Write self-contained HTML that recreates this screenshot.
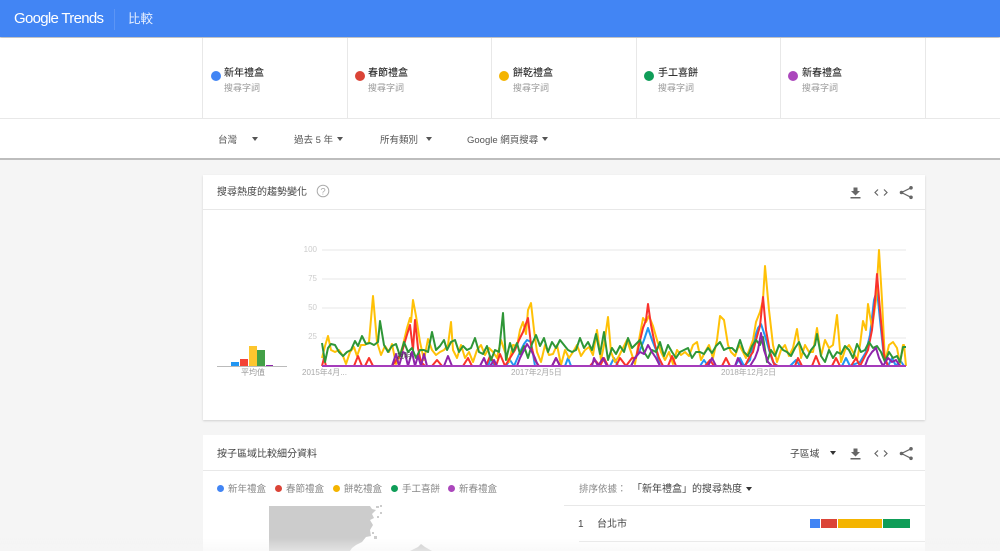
<!DOCTYPE html>
<html><head><meta charset="utf-8"><style>
html,body{margin:0;padding:0}
body{width:1000px;height:551px;overflow:hidden;position:relative;background:#f5f5f5;font-family:"Liberation Sans","Noto Sans CJK TC",sans-serif}
#w{position:absolute;left:0;top:0;width:1000px;height:551px;overflow:hidden;filter:blur(.3px)}
.a{position:absolute;white-space:nowrap}
.q{font-size:10px;color:#333;line-height:12px;font-weight:500}
.s{font-size:9px;color:#999;line-height:12px}
.f{font-size:9.5px;color:#555;line-height:12px}
.d{position:absolute;border-radius:50%}
.v{position:absolute;top:38px;width:1px;height:80px;background:#e8e8e8}
.t{position:absolute;width:0;height:0;border-left:3px solid transparent;border-right:3px solid transparent;border-top:4px solid #555}
.y{font-size:8px;color:#ccc;line-height:10px;text-align:right;width:16px;left:301px}
.x{font-size:8px;color:#aaa;line-height:10px}
.l{font-size:9.5px;color:#888;line-height:12px}
.g{position:absolute;left:322px;width:584px;height:2px;background:#f3f3f3}
</style></head><body><div id="w">
<div class="a" style="left:0;top:0;width:1000px;height:37px;background:#4285f4;box-shadow:0 1px 2px rgba(0,0,0,.3)"></div>
<div class="a" style="left:14px;top:10px;font-size:15px;line-height:18px;color:#fff;letter-spacing:-.7px">Google Trends</div>
<div class="a" style="left:114px;top:9px;width:1px;height:21px;background:#5c95f5"></div>
<div class="a" style="left:128px;top:12px;font-size:12.5px;line-height:15px;color:#e8f0fe">比較</div>

<div class="a" style="left:0;top:38px;width:1000px;height:80px;background:#fff;border-bottom:1px solid #e8e8e8"></div>
<div class="a" style="left:0;top:119px;width:1000px;height:39px;background:#fff;border-bottom:2px solid #bdbdbd"></div>
<div class="v" style="left:202px"></div><div class="v" style="left:347px"></div><div class="v" style="left:491px"></div><div class="v" style="left:636px"></div><div class="v" style="left:780px"></div><div class="v" style="left:925px"></div>

<div class="d" style="left:211px;top:71px;width:10px;height:10px;background:#4285f4"></div>
<div class="a q" style="left:224px;top:67.500px">新年禮盒</div><div class="a s" style="left:224px;top:81.500px">搜尋字詞</div>
<div class="d" style="left:355px;top:71px;width:10px;height:10px;background:#db4437"></div>
<div class="a q" style="left:368px;top:67.500px">春節禮盒</div><div class="a s" style="left:368px;top:81.500px">搜尋字詞</div>
<div class="d" style="left:499px;top:71px;width:10px;height:10px;background:#f4b400"></div>
<div class="a q" style="left:513px;top:67.500px">餅乾禮盒</div><div class="a s" style="left:513px;top:81.500px">搜尋字詞</div>
<div class="d" style="left:644px;top:71px;width:10px;height:10px;background:#0f9d58"></div>
<div class="a q" style="left:658px;top:67.500px">手工喜餅</div><div class="a s" style="left:658px;top:81.500px">搜尋字詞</div>
<div class="d" style="left:788px;top:71px;width:10px;height:10px;background:#ab47bc"></div>
<div class="a q" style="left:802px;top:67.500px">新春禮盒</div><div class="a s" style="left:802px;top:81.500px">搜尋字詞</div>

<div class="a f" style="left:218px;top:134.500px">台灣</div><div class="t" style="left:252px;top:137px"></div>
<div class="a f" style="left:294px;top:134.500px">過去 5 年</div><div class="t" style="left:337px;top:137px"></div>
<div class="a f" style="left:380px;top:134.500px">所有類別</div><div class="t" style="left:426px;top:137px"></div>
<div class="a f" style="left:467px;top:134.500px">Google 網頁搜尋</div><div class="t" style="left:542px;top:137px"></div>

<div class="a" style="left:203px;top:175px;width:722px;height:245px;background:#fff;box-shadow:0 1px 2px rgba(0,0,0,.15)"></div>
<div class="a" style="left:203px;top:209px;width:722px;height:1px;background:#e8e8e8"></div>
<div class="a" style="left:217px;top:186px;font-size:10px;line-height:13px;color:#444">搜尋熱度的趨勢變化</div>
<svg class="a" style="left:316px;top:184px" width="14" height="14" viewBox="0 0 14 14"><circle cx="7" cy="7" r="5.800" fill="none" stroke="#aaa" stroke-width="1"/><text x="7" y="10.300" font-size="9.500" text-anchor="middle" fill="#aaa" font-family="Liberation Sans">?</text></svg>

<svg class="a" style="left:849px;top:185px" width="66" height="15" viewBox="0 0 66 15"><path d="M4.500 2.500h4v3.500h2.500l-4.500 4.500L2 6h2.500zM1.500 12h10v1.500h-10z" fill="#666"/><path d="M29 4.500l-3 3 3 3M35 4.500l3 3-3 3" fill="none" stroke="#666" stroke-width="1.200"/><path d="M62 2.800L52.500 7.500l9.500 4.800" fill="none" stroke="#666" stroke-width="1.200"/><circle cx="62" cy="2.800" r="1.800" fill="#666"/><circle cx="52.500" cy="7.500" r="1.800" fill="#666"/><circle cx="62" cy="12.300" r="1.800" fill="#666"/></svg>

<div class="g" style="top:249px"></div><div class="g" style="top:278px"></div><div class="g" style="top:307px"></div><div class="g" style="top:337px"></div>
<div class="a y" style="top:245px">100</div><div class="a y" style="top:274px">75</div><div class="a y" style="top:303px">50</div><div class="a y" style="top:332px">25</div>

<div class="a" style="left:217px;top:366px;width:70px;height:1px;background:#bbb"></div>
<div class="a" style="left:231px;top:362px;width:8px;height:4px;background:#2196f3"></div>
<div class="a" style="left:240px;top:359px;width:8px;height:7px;background:#f44336"></div>
<div class="a" style="left:249px;top:346px;width:7.500px;height:20px;background:#fdc62e"></div>
<div class="a" style="left:257px;top:350px;width:8px;height:16px;background:#43a047"></div>
<div class="a" style="left:266px;top:365px;width:7px;height:1px;background:#8e24aa"></div>
<div class="a x" style="left:241px;top:368px;color:#999">平均值</div>
<div class="a x" style="left:302px;top:368px">2015年4月...</div>
<div class="a x" style="left:511px;top:368px">2017年2月5日</div>
<div class="a x" style="left:721px;top:368px">2018年12月2日</div>

<svg class="a" style="left:0;top:0" width="1000" height="400" viewBox="0 0 1000 400" fill="none" stroke-width="2" stroke-linejoin="round">
<polyline stroke="#2196f3" points="322,366 488,366 491,358 494,366 506,366 510,360 514,366 520,352 524,344 527,340 531,342 535,366 565,366 568,358 571,366 610,366 614,358 618,366 631,366 636,356 640,350 644,340 648,328 652,340 656,350 660,366 700,366 704,360 708,366 735,366 740,358 744,366 750,360 754,340 758,328 761,324 765,336 769,350 773,362 777,366 790,366 796,360 800,366 842,366 846,358 850,366 860,362 866,352 870,335 874,300 877,290 880,320 884,358 888,366 892,358 896,366 900,360 904,366"/>
<polyline stroke="#ffc107" points="322,358 325,346 328,336 331,350 335,352 339,350 343,356 346,364 350,352 354,347 357,356 361,345 365,345 369,342 373,296 377,342 381,355 385,346 389,352 392,344 396,364 399,358 403,345 407,328 410,318 411,322 413,300 416,316 420,342 424,360 428,339 432,350 436,355 440,352 444,350 448,345 451,322 453,350 457,358 461,345 465,358 469,352 473,362 477,350 481,345 485,355 489,348 493,352 497,358 501,340 505,352 509,362 513,345 517,346 520,330 523,322 526,334 528,310 531,303 534,330 537,352 541,362 545,345 549,355 553,354 557,345 561,365 565,350 569,358 573,352 577,345 581,356 585,350 589,347 593,355 597,330 601,360 604,345 608,317 611,352 615,362 619,356 623,348 627,340 631,352 635,364 639,340 643,318 646,322 649,316 653,326 657,340 661,352 665,360 669,352 673,364 677,350 681,355 685,352 689,356 693,345 697,342 701,360 705,352 709,345 713,358 717,340 720,316 724,320 728,345 731,352 735,356 739,345 743,352 746,358 750,348 753,340 756,322 760,312 763,300 765,266 769,310 773,345 777,362 781,350 785,345 789,356 793,348 797,329 801,358 805,345 809,352 813,352 817,328 821,356 825,340 829,348 833,345 837,315 841,362 845,350 849,345 853,352 857,360 860,345 863,321 866,330 868,304 872,328 876,300 879,250 882,300 885,362 889,345 893,342 897,348 900,364 903,345 904,345 906,366"/>
<polyline stroke="#f9322c" points="322,366 324,358 326,366 354,366 358,356 362,366 365,366 369,358 373,366 392,366 398,358 402,352 406,338 410,325 413,350 415,320 418,348 421,362 425,366 432,366 437,360 442,366 463,366 468,358 472,366 486,366 490,356 496,366 500,354 505,366 510,358 515,350 519,340 523,332 528,318 531,345 535,360 539,366 552,366 556,358 560,366 590,366 595,360 600,366 604,358 608,366 616,366 620,358 626,366 632,358 636,358 639,345 643,328 646,320 648,304 651,325 655,345 659,358 663,366 668,366 672,356 676,366 705,366 710,360 714,366 722,366 726,358 730,366 745,366 749,358 753,352 756,340 760,326 763,297 766,330 770,352 774,364 778,366 795,366 798,358 802,366 812,366 816,356 820,366 832,366 836,358 840,366 851,366 856,358 860,366 864,358 868,350 872,330 875,300 877,274 880,310 884,355 888,366 906,366"/>
<polyline stroke="#2e9637" points="322,343 325,362 328,348 331,344 335,345 339,352 343,356 347,352 351,350 355,341 358,346 362,336 366,344 370,343 374,345 378,342 380,321 384,345 388,352 392,346 396,344 400,356 404,342 408,352 412,348 416,358 420,350 424,350 428,352 432,332 436,350 440,346 444,340 447,350 451,342 455,340 459,352 463,346 467,350 471,348 475,338 479,352 483,354 487,346 491,360 495,350 499,352 503,313 506,360 510,343 513,352 517,343 520,354 524,346 528,358 532,344 536,335 540,346 544,338 548,352 552,342 556,348 560,340 564,345 568,350 572,352 576,350 580,338 584,348 588,342 592,350 596,334 600,354 604,332 608,360 612,348 616,354 620,346 624,352 628,338 632,348 636,344 640,340 644,352 648,358 652,350 656,352 660,342 664,356 668,345 672,352 676,358 680,352 684,350 688,348 692,358 696,352 700,352 704,354 708,348 712,353 716,346 720,342 724,350 728,348 732,348 736,352 740,340 744,352 748,356 752,346 756,340 760,345 763,337 767,362 771,350 775,356 779,345 783,350 787,352 791,356 795,348 799,342 803,352 807,358 811,350 815,345 817,334 821,356 825,362 829,350 833,358 837,352 841,354 845,346 849,350 853,358 857,344 861,352 865,350 869,342 873,348 877,346 881,352 885,362 889,352 893,358 897,356 900,362 903,347 906,347"/>
<polyline stroke="#8e24aa" points="322,366 392,366 396,354 399,366 403,352 405,353 408,366 412,352 415,366 418,356 421,366 424,354 427,366 444,366 448,356 452,366 480,366 484,358 487,366 490,366 494,360 497,366 517,366 520,358 524,350 527,344 531,350 535,358 538,366 552,366 556,358 560,366 592,366 594,358 598,366 603,358 607,366 631,366 635,358 640,352 644,354 648,345 652,352 656,358 660,366 708,366 712,358 716,366 735,366 738,358 742,366 750,366 755,358 758,350 761,333 764,350 768,362 772,366 865,366 868,358 872,352 876,348 879,358 883,366 888,358 892,362 896,360 900,366"/>
<line x1="322" y1="366" x2="906" y2="366" stroke="#a53cbb" stroke-width="2"/>
</svg>
<div class="a" style="left:397px;top:352px;font-size:7px;line-height:9px;color:#444">說明</div>

<div class="a" style="left:203px;top:435px;width:722px;height:116px;background:#fff"></div>
<div class="a" style="left:203px;top:470px;width:722px;height:1px;background:#e8e8e8"></div>
<div class="a" style="left:217px;top:447.500px;font-size:10px;line-height:13px;color:#444">按子區域比較細分資料</div>
<div class="a" style="left:790px;top:447.500px;font-size:9.800px;line-height:13px;color:#444">子區域</div>
<div class="t" style="left:830px;top:451px;border-top-color:#333"></div>
<svg class="a" style="left:849px;top:446px" width="66" height="15" viewBox="0 0 66 15"><path d="M4.500 2.500h4v3.500h2.500l-4.500 4.500L2 6h2.500zM1.500 12h10v1.500h-10z" fill="#666"/><path d="M29 4.500l-3 3 3 3M35 4.500l3 3-3 3" fill="none" stroke="#666" stroke-width="1.200"/><path d="M62 2.800L52.500 7.500l9.500 4.800" fill="none" stroke="#666" stroke-width="1.200"/><circle cx="62" cy="2.800" r="1.800" fill="#666"/><circle cx="52.500" cy="7.500" r="1.800" fill="#666"/><circle cx="62" cy="12.300" r="1.800" fill="#666"/></svg>

<div class="d" style="left:217px;top:485px;width:7px;height:7px;background:#4285f4"></div><div class="a l" style="left:228px;top:484px">新年禮盒</div>
<div class="d" style="left:275px;top:485px;width:7px;height:7px;background:#db4437"></div><div class="a l" style="left:286px;top:484px">春節禮盒</div>
<div class="d" style="left:333px;top:485px;width:7px;height:7px;background:#f4b400"></div><div class="a l" style="left:344px;top:484px">餅乾禮盒</div>
<div class="d" style="left:391px;top:485px;width:7px;height:7px;background:#0f9d58"></div><div class="a l" style="left:402px;top:484px">手工喜餅</div>
<div class="d" style="left:448px;top:485px;width:7px;height:7px;background:#ab47bc"></div><div class="a l" style="left:459px;top:484px">新春禮盒</div>

<svg class="a" style="left:260px;top:500px" width="190" height="51" viewBox="0 0 190 51"><path d="M9 6H110L112 9 116 10 112 14 114 18 110 20 113 25 110 30 111 36 106 37 102 42 96 45 92 48 90 51H9z" fill="#ccc"/><path d="M116 6h3v2h-3zM120 12h2v2h-2zM117 16h2v2h-2zM114 36h3v3h-3zM112 32h2v2h-2zM120 5h2v2h-2z" fill="#ccc"/><path d="M150 51L158 47 161 44 165 47 172 51z" fill="#ccc"/></svg>

<div class="a" style="left:579px;top:484px;font-size:9.500px;line-height:12px;color:#888">排序依據：</div>
<div class="a" style="left:632px;top:484px;font-size:10px;line-height:12px;color:#444">「新年禮盒」的搜尋熱度</div>
<div class="t" style="left:746px;top:487px;border-top-color:#333"></div>
<div class="a" style="left:564px;top:505px;width:361px;height:1px;background:#e8e8e8"></div>
<div class="a" style="left:578px;top:518px;font-size:10px;line-height:13px;color:#444">1</div>
<div class="a" style="left:597px;top:518px;font-size:10px;line-height:13px;color:#444">台北市</div>
<div class="a" style="left:810px;top:519px;width:10px;height:9px;background:#4285f4"></div>
<div class="a" style="left:821px;top:519px;width:16px;height:9px;background:#db4437"></div>
<div class="a" style="left:838px;top:519px;width:44px;height:9px;background:#f4b400"></div>
<div class="a" style="left:883px;top:519px;width:27px;height:9px;background:#0f9d58"></div>
<div class="a" style="left:579px;top:541px;width:346px;height:1px;background:#e8e8e8"></div>
<div class="a" style="left:0;top:538px;width:1000px;height:13px;background:linear-gradient(rgba(245,245,245,0),rgba(245,245,245,.55))"></div>
</div></body></html>
